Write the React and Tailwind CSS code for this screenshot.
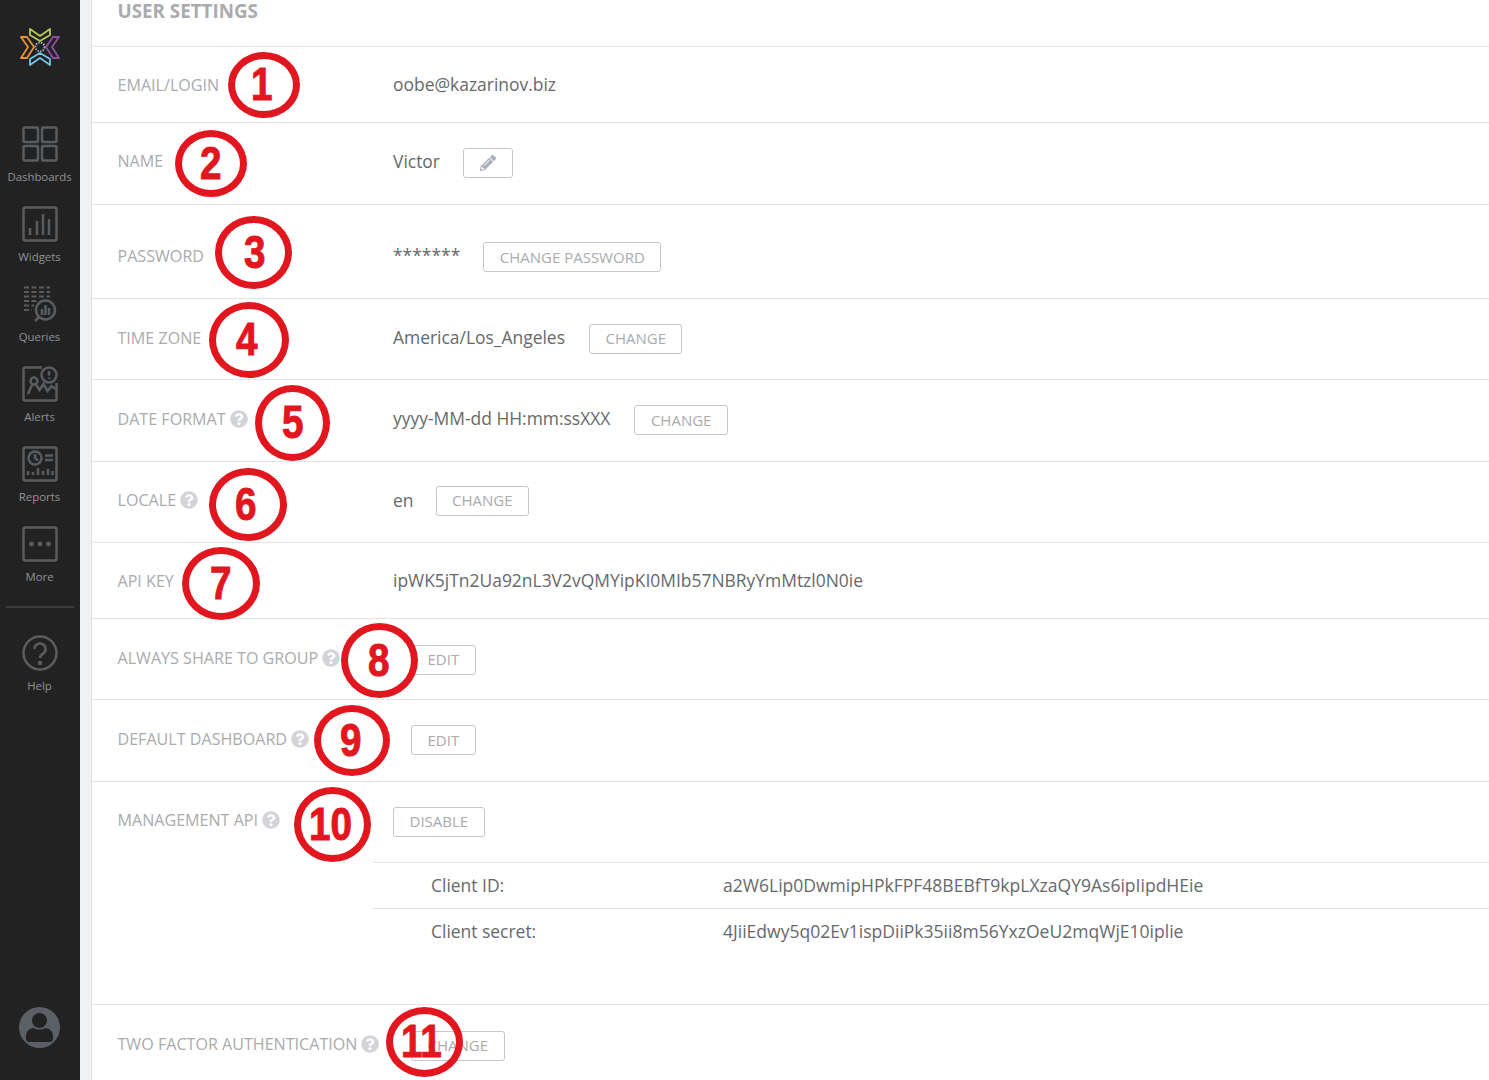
import { FaPencilAlt, FaQuestionCircle } from "react-icons/fa";

const NavIcon = ({ children }) => (
  <svg width="36" height="36" viewBox="0 0 36 36" fill="none" stroke="#5a5d60" strokeWidth="2.500">
    {children}
  </svg>
);

const navItems = [
  {
    label: "Dashboards",
    icon: (
      <>
        <rect x="1.500" y="1.500" width="14.500" height="14.500" rx="1" />
        <rect x="20" y="1.500" width="14.500" height="14.500" rx="1" />
        <rect x="1.500" y="20" width="14.500" height="14.500" rx="1" />
        <rect x="20" y="20" width="14.500" height="14.500" rx="1" />
      </>
    ),
  },
  {
    label: "Widgets",
    icon: (
      <>
        <rect x="1.500" y="1.500" width="33" height="33" rx="2" />
        <path d="M8 29v-7M15 29V15M21 29V8M27 29V13" />
      </>
    ),
  },
  {
    label: "Queries",
    icon: (
      <>
        <path d="M2 1.500h26M2 6h26M2 10.500h26M2 15h14M2 19.500h10M2 24h8" strokeDasharray="5 2.500" strokeWidth="2" />
        <circle cx="23.500" cy="24" r="9.500" fill="#222222" />
        <path d="M20 29v-6M23.500 29V19M27 29v-7M17 31l-4 4" />
      </>
    ),
  },
  {
    label: "Alerts",
    icon: (
      <>
        <path d="M20 1.500H3a1.500 1.500 0 0 0-1.500 1.500v30A1.500 1.500 0 0 0 3 34.500h30a1.500 1.500 0 0 0 1.500-1.500V17" />
        <circle cx="27" cy="9" r="7.500" />
        <path d="M27 5v4.500M27 11.500v1.500" />
        <circle cx="12" cy="15" r="3.500" />
        <path d="M10.500 18L6 28M13.500 18l4 6 4-6 4 7 4-5 4 3" />
      </>
    ),
  },
  {
    label: "Reports",
    icon: (
      <>
        <rect x="1.500" y="1.500" width="33" height="33" rx="2" />
        <circle cx="13" cy="12" r="6.500" />
        <path d="M13 8v4l3 2.500M23 9.500h8M23 14h8M6 29v-4M11 29v-3M16 29v-7M21 29v-4M26 29v-6M30.500 29v-4" />
      </>
    ),
  },
  {
    label: "More",
    icon: (
      <>
        <rect x="1.500" y="1.500" width="33" height="33" rx="2" />
        <circle cx="9.500" cy="18" r="1.200" fill="#5a5d60" />
        <circle cx="18" cy="18" r="1.200" fill="#5a5d60" />
        <circle cx="26.500" cy="18" r="1.200" fill="#5a5d60" />
      </>
    ),
  },
];

const Logo = () => (
  <svg width="40" height="42" viewBox="1 0 40 42" fill="none" strokeWidth="1.800" strokeLinejoin="round">
    <path d="M11 2l10 7 10-7v6l-10 6-10-6z" stroke="#b5c95c" />
    <path d="M2 10h6l7 10-7 11H2l7-11z" stroke="#e8923a" />
    <path d="M40 10h-6l-7 10 7 11h6l-7-11z" stroke="#8f4fa3" />
    <path d="M11 38l10-7 10 7v-6l-10-6-10 6z" stroke="#72c4e6" />
    <circle cx="21" cy="20" r="4.500" stroke="#9fb6c4" strokeDasharray="1.500 1.200" />
  </svg>
);

const Sidebar = () => (
  <aside className="w-20 h-full shrink-0 bg-[#222222] flex flex-col items-center font-['Open_Sans',sans-serif]">
    <div className="h-[120px] pt-[27px] pr-px shrink-0">
      <Logo />
    </div>
    {navItems.map((item) => (
      <div key={item.label} className="h-20 w-full pt-[6px] pr-px flex flex-col items-center shrink-0">
        <NavIcon>{item.icon}</NavIcon>
        <span className="mt-[5px] text-[11.400px] leading-[20px] text-[#8f9295]">{item.label}</span>
      </div>
    ))}
    <div className="w-[68px] h-[2px] mt-[6px] bg-[#3a3c3e] shrink-0"></div>
    <div className="w-full pt-[27px] pr-px flex flex-col items-center">
      <svg width="36" height="36" viewBox="0 0 36 36" fill="none" stroke="#5a5d60" strokeWidth="2.500">
        <circle cx="18" cy="18" r="16.500" />
        <path d="M12.500 14a5.500 5.500 0 1 1 8.500 4.600c-2 1.300-3 2.300-3 4.400" />
        <circle cx="18" cy="28" r="1" fill="#5a5d60" />
      </svg>
      <span className="mt-[5px] text-[11.400px] leading-[20px] text-[#8f9295]">Help</span>
    </div>
    <div className="mt-auto pb-[32px] pr-[2px]">
      <svg width="41" height="41" viewBox="0 0 41 41">
        <circle cx="20.500" cy="20.500" r="20.500" fill="#5b6066" />
        <circle cx="20.500" cy="13.500" r="7.500" fill="#222222" />
        <path d="M7 29c0-5 4-8 8-8 2 2 9 2 11 0 4 0 8 3 8 8v3c0 1.500-1 3-3 3H10c-2 0-3-1.500-3-3z" fill="#222222" />
      </svg>
    </div>
  </aside>
);

const Help = () => <FaQuestionCircle className="ml-[4px] text-[#d2d4da] text-[18px] shrink-0" />;

const Btn = ({ children, className = "" }) => (
  <button className={`h-[30px] px-[15.500px] border border-[#c5c7c9] rounded-[3px] text-[15px] text-[#a9abad] leading-none shrink-0 ${className}`}>
    {children}
  </button>
);

const Row = ({ label, help, className, children }) => (
  <div className={`flex items-center pl-[25.500px] border-b border-[#e4e5e7] ${className}`}>
    <div className="w-[275.500px] shrink-0 flex items-center text-[16.100px] text-[#a9abad] whitespace-nowrap">
      {label}
      {help && <Help />}
    </div>
    <div className="flex items-center text-[17.450px] text-[#66696c] whitespace-nowrap">{children}</div>
  </div>
);

const Mark = ({ className, children }) => (
  <div className={`absolute border-[7px] border-[#e2161f] rounded-[50%] flex items-center justify-center font-['Liberation_Sans',sans-serif] font-bold text-[46px] leading-none text-[#e2161f] ${className}`}>
    <span className="scale-x-[0.84] mb-[2px] [-webkit-text-stroke:1px_#e2161f]">{children}</span>
  </div>
);

export default function App() {
  return (
    <div className="relative flex h-[1080px] overflow-hidden bg-white font-['Open_Sans',sans-serif]">
      <Sidebar />
      <div className="w-3 h-full shrink-0 bg-[#f0f1f3] border-r border-[#e1e3e6]"></div>
      <main className="flex-1 min-w-0">
        <h1 className="h-[47px] pl-[25.500px] text-[18.800px] leading-[23px] font-bold text-[#a9abad] border-b border-[#e4e5e7]">
          USER SETTINGS
        </h1>
        <Row label="EMAIL/LOGIN" className="h-[76px] [&>div:first-child]:pt-[1px]">oobe@kazarinov.biz</Row>
        <Row label="NAME" className="h-[82px] pb-[2px] [&>div:first-child]:pb-[3px]">
          <span className="pb-[2px]">Victor</span>
          <Btn className="ml-[23px] w-[50px] !px-0 flex items-center justify-center">
            <FaPencilAlt className="text-[#aab0bc] text-[16px]" />
          </Btn>
        </Row>
        <Row label="PASSWORD" className="h-[94px] pt-[10px]">
          <span className="pb-[2px]">*******</span>
          <Btn className="ml-[23px] mt-[1px]">CHANGE PASSWORD</Btn>
        </Row>
        <Row label="TIME ZONE" className="h-[81px] pb-[2px]">
          <span className="pb-[2px]">America/Los_Angeles</span>
          <Btn className="ml-[24px] mt-[1px]">CHANGE</Btn>
        </Row>
        <Row label="DATE FORMAT" help className="h-[82px] pb-[4px] [&>div:first-child]:pt-[1px]">
          <span>yyyy-MM-dd HH:mm:ssXXX</span>
          <Btn className="ml-[24px] mt-[3px]">CHANGE</Btn>
        </Row>
        <Row label="LOCALE" help className="h-[81px] pb-[4px]">
          <span>en</span>
          <Btn className="ml-[22px] mt-[1px]">CHANGE</Btn>
        </Row>
        <Row label="API KEY" className="h-[76px] [&>div:first-child]:pt-[1px]">ipWK5jTn2Ua92nL3V2vQMYipKI0MIb57NBRyYmMtzl0N0ie</Row>
        <Row label="ALWAYS SHARE TO GROUP" help className="h-[81px] pb-[2px]">
          <Btn className="ml-[18px] mt-[3px]">EDIT</Btn>
        </Row>
        <Row label="DEFAULT DASHBOARD" help className="h-[82px] pb-[4px] [&>div:first-child]:pt-[1px]">
          <Btn className="ml-[18px] mt-[3px]">EDIT</Btn>
        </Row>
        <section className="h-[223px] border-b border-[#e4e5e7]">
          <div className="h-[80px] flex items-center pl-[25.500px] pb-[4px]">
            <div className="w-[275.500px] shrink-0 flex items-center text-[16.100px] text-[#a9abad] whitespace-nowrap">
              MANAGEMENT API
              <Help />
            </div>
            <Btn className="mt-[3px]">DISABLE</Btn>
          </div>
          <div className="ml-[281px] text-[17.450px] text-[#66696c]">
            <div className="h-[46px] flex items-center pl-[58px] border-t border-[#e4e5e7]">
              <span className="w-[292px]">Client ID:</span>
              <span className="text-[17.550px]">a2W6Lip0DwmipHPkFPF48BEBfT9kpLXzaQY9As6ipIipdHEie</span>
            </div>
            <div className="h-[46px] flex items-center pl-[58px] border-t border-[#e4e5e7]">
              <span className="w-[292px]">Client secret:</span>
              <span className="text-[17.550px]">4JiiEdwy5q02Ev1ispDiiPk35ii8m56YxzOeU2mqWjE10iplie</span>
            </div>
          </div>
        </section>
        <Row label="TWO FACTOR AUTHENTICATION" help className="h-[80px] pb-[2px] !border-b-0">
          <Btn className="ml-[18px] mt-[3px]">CHANGE</Btn>
        </Row>
      </main>

      {/* red annotation circles drawn over the page */}
      <Mark className="left-[228px] top-[52px] w-[72px] h-[66px] pr-[4px]">1</Mark>
      <Mark className="left-[175px] top-[130px] w-[72px] h-[67px]">2</Mark>
      <Mark className="left-[215px] top-[216px] w-[77px] h-[73px] pl-[3px]">3</Mark>
      <Mark className="left-[209px] top-[302px] w-[80px] h-[76px] pr-[4px]">4</Mark>
      <Mark className="left-[255px] top-[385px] w-[75px] h-[76px]">5</Mark>
      <Mark className="left-[209px] top-[468px] w-[78px] h-[73px] pr-[4px]">6</Mark>
      <Mark className="left-[182px] top-[547px] w-[78px] h-[73px]">7</Mark>
      <Mark className="left-[341px] top-[623px] w-[77px] h-[75px] pr-[2px]">8</Mark>
      <Mark className="left-[314px] top-[705px] w-[76px] h-[71px] pr-[2px]">9</Mark>
      <Mark className="left-[294px] top-[787px] w-[77px] h-[75px] pr-[4px]">10</Mark>
      <Mark className="left-[386px] top-[1007px] w-[77px] h-[70px] pr-[6px]">11</Mark>
    </div>
  );
}
